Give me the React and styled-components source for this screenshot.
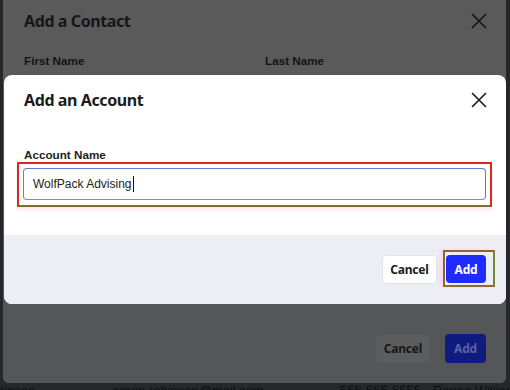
import React from "react";
import styled, { createGlobalStyle } from "styled-components";

const GlobalStyle = createGlobalStyle`
  html, body {
    margin: 0;
    padding: 0;
    background: #26272a;
    overflow: hidden;
  }
  * {
    box-sizing: border-box;
  }
`;

const CloseIcon = ({ color = "#1f1f1f" }) => (
  <svg width="16" height="16" viewBox="0 0 16 16" fill="none">
    <path d="M1.5 1.5 L14.5 14.5 M14.5 1.5 L1.5 14.5" stroke={color} strokeWidth="1.7" strokeLinecap="round" />
  </svg>
);

const App = () => {
  return (
    <Page>
      <GlobalStyle />
      <ContactModal>
        <ContactHeader>
          <Title $dim>Add a Contact</Title>
          <CloseButton>
            <CloseIcon color="#161616" />
          </CloseButton>
        </ContactHeader>
        <FieldRow>
          <Label $dim>First Name</Label>
          <Label $dim>Last Name</Label>
        </FieldRow>
        <ContactFooter>
          <Button $variant="dimCancel">Cancel</Button>
          <Button $variant="dimAdd">Add</Button>
        </ContactFooter>
      </ContactModal>
      <TableRow>
        <Cell $w="112px">obinson</Cell>
        <Cell $w="228px">aaron.robinson@mail.com</Cell>
        <Cell $w="93px">555-555-5555</Cell>
        <Cell>Renee Williams</Cell>
      </TableRow>

      <AccountModal>
        <AccountHeader>
          <Title>Add an Account</Title>
          <CloseButton>
            <CloseIcon />
          </CloseButton>
        </AccountHeader>
        <AccountBody>
          <Label>Account Name</Label>
          <Highlight>
            <TextInput>
              WolfPack Advising
              <Caret />
            </TextInput>
          </Highlight>
        </AccountBody>
        <AccountFooter>
          <Button $variant="cancel">Cancel</Button>
          <AddWrap>
            <Button $variant="add">Add</Button>
          </AddWrap>
        </AccountFooter>
      </AccountModal>
    </Page>
  );
};

const Page = styled.div`
  position: relative;
  width: 510px;
  height: 390px;
  display: flex;
  flex-direction: column;
  overflow: hidden;
`;

const ContactModal = styled.div`
  height: 383px;
  margin: 0 4px 0 3px;
  background: #5a5a5b;
  border-radius: 0 0 6px 6px;
  display: flex;
  flex-direction: column;
  flex-shrink: 0;
`;

const ContactHeader = styled.div`
  height: 41px;
  padding: 0 19px 0 21px;
  display: flex;
  align-items: center;
  justify-content: space-between;
`;

const Title = styled.h2`
  margin: 0;
  font-family: "Noto Sans", "Open Sans", sans-serif;
  font-size: 16px;
  font-weight: 700;
  letter-spacing: -0.4px;
  color: ${(p) => (p.$dim ? "#161616" : "#1c1c1c")};
`;

const CloseButton = styled.div`
  width: 16px;
  height: 16px;
  display: flex;
`;

const FieldRow = styled.div`
  display: grid;
  grid-template-columns: 241px 1fr;
  padding: 13px 21px 0;
`;

const Label = styled.div`
  font-family: "Liberation Sans", Arial, sans-serif;
  font-size: 11.7px;
  font-weight: 700;
  color: ${(p) => (p.$dim ? "#141414" : "#1e1e1e")};
`;

const ContactFooter = styled.div`
  margin-top: auto;
  padding: 100px 20px 20px 0;
  display: flex;
  justify-content: flex-end;
  align-items: center;
  gap: 15px;
  background: #555658;
  border-radius: 0 0 6px 6px;
`;

const Button = styled.button`
  border-radius: 4px;
  font-family: "Noto Sans", "Open Sans", sans-serif;
  font-size: 12px;
  font-weight: 700;
  letter-spacing: -0.2px;
  cursor: pointer;
  padding: 0;
  display: flex;
  align-items: center;
  justify-content: center;
  ${(p) =>
    p.$variant === "cancel" &&
    `
    width: 55px;
    height: 29px;
    background: #ffffff;
    border: 1px solid #e2e2ea;
    color: #202020;
  `}
  ${(p) =>
    p.$variant === "add" &&
    `
    width: 40px;
    height: 28px;
    background: #1f2cff;
    border: none;
    color: #ffffff;
  `}
  ${(p) =>
    p.$variant === "dimCancel" &&
    `
    width: 54px;
    height: 27px;
    background: #5c5d5f;
    border: none;
    color: #161616;
  `}
  ${(p) =>
    p.$variant === "dimAdd" &&
    `
    width: 41px;
    height: 29px;
    background: #101b7e;
    border: none;
    color: #5862a0;
  `}
`;

const TableRow = styled.div`
  display: flex;
  height: 7px;
  overflow: hidden;
  font-family: "Liberation Sans", Arial, sans-serif;
  font-size: 13px;
  color: #0e0f12;
  line-height: 14px;
  filter: blur(0.4px);
`;

const Cell = styled.div`
  width: ${(p) => p.$w || "auto"};
  flex-shrink: 0;
  margin-top: 1px;
  white-space: nowrap;
  &:first-child {
    margin-left: -10px;
    width: 122px;
  }
`;

const AccountModal = styled.div`
  position: absolute;
  top: 75px;
  left: 4px;
  width: 502px;
  height: 229px;
  background: #ffffff;
  border-radius: 8px;
  display: flex;
  flex-direction: column;
  overflow: hidden;
`;

const AccountHeader = styled.div`
  height: 50px;
  padding: 0 19px 0 20px;
  display: flex;
  align-items: center;
  justify-content: space-between;
`;

const AccountBody = styled.div`
  padding: 23px 14px 0 13px;
  display: flex;
  flex-direction: column;
  gap: 1px;
  & > ${Label} {
    padding-left: 7px;
  }
`;

const Highlight = styled.div`
  border: 2px solid #d52a1e;
  border-bottom-color: #7f6a30;
  padding: 4px 4px 5px 4px;
  box-shadow: 0 3px 3px rgba(250, 200, 230, 0.45);
`;

const TextInput = styled.div`
  height: 32px;
  border: 1.5px solid #5d80c6;
  border-bottom-color: #8a7fd0;
  border-radius: 4px;
  padding: 0 9px;
  display: flex;
  align-items: center;
  font-family: "Liberation Sans", Arial, sans-serif;
  font-size: 12px;
  color: #222222;
`;

const Caret = styled.span`
  display: inline-block;
  width: 1px;
  height: 16px;
  margin-left: 1px;
  background: #111111;
`;

const AccountFooter = styled.div`
  margin-top: auto;
  height: 69px;
  background: #eeeff4;
  display: flex;
  justify-content: flex-end;
  align-items: center;
  gap: 6px;
  padding: 0 11px 0 0;
`;

const AddWrap = styled.div`
  padding: 3px 7px 2px 1px;
  border: 2px solid #8b6a2c;
  border-right-color: #6f8a3c;
  box-shadow: -3px 0 4px rgba(255, 190, 220, 0.5);
  margin-top: -2px;
`;

export default App;
